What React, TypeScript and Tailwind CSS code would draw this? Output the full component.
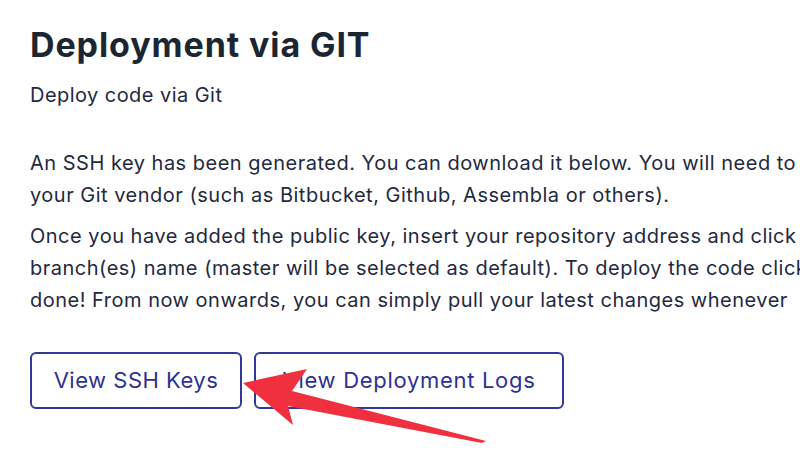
import React from "react";

export default function App() {
  return (
    <div
      className="relative w-[800px] h-[459px] overflow-hidden bg-white"
      style={{ fontFamily: "Inter, 'Noto Sans', sans-serif" }}
    >
      <div className="pl-[30px] pt-[25px]">
        <h1 className="text-[34px] leading-[40px] font-bold tracking-[0.9px] text-[#1c2632] whitespace-nowrap">
          Deployment via GIT
        </h1>
        <p className="mt-[16px] text-[20px] leading-[28px] tracking-[0.45px] text-[#1f2940] whitespace-nowrap">
          Deploy code via Git
        </p>
        <div className="mt-[38px] text-[20px] leading-[32px] tracking-[0.5px] text-[#1f2940] whitespace-nowrap">
          <p>
            An SSH key has been generated. You can download it below. You will need to
            <br />
            your Git vendor (such as Bitbucket, Github, Assembla or others).
          </p>
          <p className="mt-[9px]">
            Once you have added the public key, insert your repository address and click
            <br />
            branch(es) name (master will be selected as default). To deploy the code click
            <br />
            done! From now onwards, you can simply pull your latest changes whenever
          </p>
        </div>
        <div className="mt-[36px] flex gap-[12px]">
          <button className="h-[57px] w-[212px] rounded-[6px] border-2 border-[#33379a] text-[22px] tracking-[0.5px] text-[#2e3192] whitespace-nowrap">
            View SSH Keys
          </button>
          <button className="h-[57px] w-[310px] rounded-[6px] border-2 border-[#33379a] text-[22px] tracking-[0.7px] text-[#2e3192] whitespace-nowrap">
            View Deployment Logs
          </button>
        </div>
      </div>
      <svg
        className="absolute inset-0 pointer-events-none"
        width="800"
        height="459"
        viewBox="0 0 800 459"
      >
        <polygon
          points="243,383 307,369 292,391 486,441 482,443 288,406 293,425"
          fill="#f0303f"
        />
      </svg>
    </div>
  );
}
